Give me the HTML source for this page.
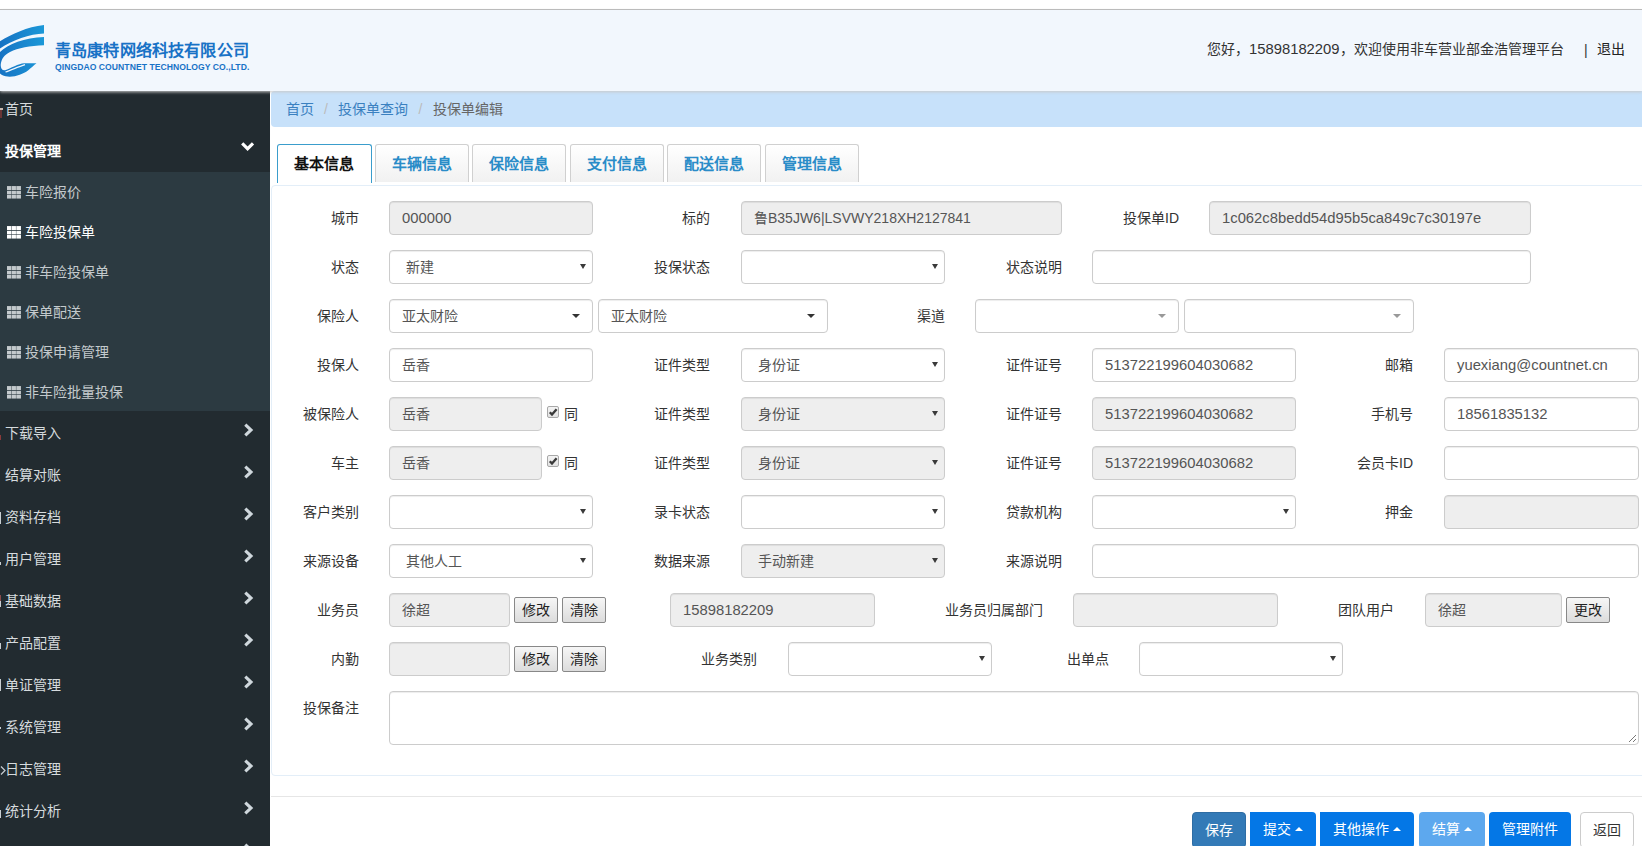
<!DOCTYPE html>
<html lang="zh-CN"><head><meta charset="utf-8">
<style>
*{box-sizing:border-box;margin:0;padding:0}
html,body{width:1642px;height:846px;overflow:hidden;background:#fff;font-family:"Liberation Sans",sans-serif;font-size:14px;color:#333}
.a{position:absolute;white-space:nowrap}
#topline{position:absolute;left:0;top:9px;width:1642px;height:1px;background:#b9b9b9}
#header{position:absolute;left:0;top:10px;width:1642px;height:81px;background:#f2f7fd;z-index:2;box-shadow:0 1px 3px #c8c8c8}
#side{position:absolute;left:0;top:91px;width:270px;height:755px;background:#222b30}
#sub{position:absolute;left:0;top:81px;width:270px;height:239px;background:#2c3a41}
.si{position:absolute;left:5px;color:#d6dbde;font-size:14px;line-height:20px}
.sub{position:absolute;left:25px;color:#c4cacd;font-size:14px;line-height:20px}
.grid{position:absolute;left:6.6px;width:15px;height:13px}
.chev{position:absolute;left:0;top:0}
#crumb{position:absolute;left:271px;top:91px;width:1371px;height:36px;background:#c7e1fa;border-radius:4px 0 0 4px}
.tab{position:absolute;top:144px;height:38px;border:1px solid #d0d0d0;border-bottom:none;border-radius:3px 3px 0 0;background:linear-gradient(#fff,#f1f1f1);color:#2a8cc8;font-weight:bold;font-size:15px;text-align:center;line-height:37px}
.tab.act{background:#fff;border-color:#3a9dcc;color:#111;height:39px;text-indent:-2px}
.lbl{position:absolute;font-size:14px;color:#333;line-height:20px;text-align:right;white-space:nowrap}
.inp{position:absolute;height:34px;border:1px solid #ccc;border-radius:4px;background:#fff;color:#555;font-size:14px;line-height:32px;padding-left:12px;white-space:nowrap;overflow:hidden;box-shadow:inset 0 1px 1px rgba(0,0,0,.075)}
.n{font-size:14.8px}
.dis{background:#eee}
.sel{padding-left:16px !important}
.arr{position:absolute;right:6px;top:13px;width:0;height:0;border-left:3px solid transparent;border-right:3px solid transparent;border-top:5.5px solid #3a3a3a}
.car{position:absolute;right:12px;top:14px;width:0;height:0;border-left:4px solid transparent;border-right:4px solid transparent;border-top:4px solid #333}
.car2{position:absolute;right:12px;top:14px;width:0;height:0;border-left:4px solid transparent;border-right:4px solid transparent;border-top:4px solid #999}
.btn{position:absolute;height:26px;border:1px solid #888;border-radius:2px;background:linear-gradient(#f6f6f6,#dcdcdc);font-size:14px;line-height:24px;text-align:center;color:#222}
.cb{position:absolute;width:12px;height:12px;border:1px solid #a8a8a8;border-radius:2px;background:linear-gradient(#f4f4f4,#e2e2e2)}
.bb{position:absolute;top:812px;height:36px;border-radius:4px;color:#fff;font-size:14px;line-height:34px;text-align:center;background:#0477e6}
.up{display:inline-block;width:0;height:0;border-left:4px solid transparent;border-right:4px solid transparent;border-bottom:4px solid #fff;vertical-align:middle;margin-left:4px;position:relative;top:-1px}
</style></head><body>
<div id="topline"></div>
<div id="header">
  <svg class="a" style="left:0;top:0" width="50" height="81" viewBox="0 10 50 81">
    <defs><linearGradient id="lg" x1="0" y1="0" x2="1" y2="0"><stop offset="0" stop-color="#1670c2"/><stop offset="1" stop-color="#1b98d8"/></linearGradient></defs>
    <path d="M44,25 L44,33.5 C30,34 12,40 0,48.5 L-2,49.5 L-2,42.5 C10,35 26,27 44,25 Z" fill="url(#lg)"/>
    <path d="M44,37 C24,37.5 6,45 -1,53 C-6,60 -4,72 2,75 C10,79 22,75 28,70.5 C31,68 34,65 36.5,63.2 L24,63.3 C19,63.5 10,68.5 5.2,70.3 C2,70.8 0.3,68 0.8,64 C1.5,59 4,55 10,52 C18,48 30,45.5 44,45.2 Z" fill="url(#lg)"/>
    <path d="M5.5,72 C11,70.2 18,66.8 25,64.6" stroke="#f2f7fd" stroke-width="1.2" fill="none"/>
  </svg>
  <div class="a" style="left:55px;top:30.5px;font-size:16px;transform:scaleX(1.01);transform-origin:0 0;font-weight:bold;color:#1872c6;line-height:20px">青岛康特网络科技有限公司</div>
  <div class="a" style="left:55px;top:52.3px;font-size:8.6px;letter-spacing:0.05px;font-weight:bold;color:#1872c6;line-height:10px">QINGDAO COUNTNET TECHNOLOGY CO.,LTD.</div>
  <div class="a" style="left:1207px;top:29px;font-size:14px;color:#333;line-height:20px">您好，<span class="n">15898182209</span>，欢迎使用非车营业部金浩管理平台</div>
  <div class="a" style="left:1584px;top:30px;font-size:14px;color:#333;line-height:20px">|</div>
  <div class="a" style="left:1597px;top:29px;font-size:14px;color:#222;line-height:20px">退出</div>
</div>
<div id="side">
<div class="a" style="left:0;top:19px;width:2px;height:8px;background:#6a3535"></div><div class="a" style="left:0;top:17px;width:3px;height:2px;background:#c9b9b0"></div>
<div class="a" style="left:0;top:344px;width:1.2px;height:5px;background:#8a3a3a"></div>
<div class="a" style="left:0;top:421px;width:1.2px;height:12px;background:#c8ced2"></div>
<div class="a" style="left:0;top:471px;width:1.2px;height:3px;background:#c8ced2"></div>
<div class="a" style="left:0;top:504px;width:1.2px;height:6px;background:#8a4a4a"></div>
<div class="a" style="left:0;top:510px;width:1.2px;height:6px;background:#c8ced2"></div>
<div class="a" style="left:0;top:552px;width:1.2px;height:6px;background:#c8ced2"></div>
<div class="a" style="left:0;top:588px;width:1.2px;height:12px;background:#c8ced2"></div>
<div class="a" style="left:0;top:636px;width:1.2px;height:2px;background:#c8ced2"></div>
<div class="a" style="left:0;top:719px;width:1.2px;height:8px;background:#c8ced2"></div>
<svg class="a" style="left:0;top:675px" width="8" height="9" viewBox="0 0 8 9"><path d="M1,0.5 L5,4.5 L1,8.5" stroke="#c8ced2" stroke-width="1.2" fill="none"/></svg>
<div class="si" style="top:8px">首页</div>
<div class="si" style="top:50px;color:#fff;font-weight:bold">投保管理</div>
<svg class="chev" width="270" height="200"><path d="M242.2,52.3 L247.6,57.7 L253,52.3" stroke="#fff" stroke-width="3.1" fill="none"/></svg>
<div id="sub">
<svg class="grid" style="top:14px" width="15" height="13" viewBox="0 0 15.6 13.4" fill="#c4cacd"><rect x="0" y="0" width="4.5" height="4.2"/><rect x="4.9" y="0" width="4.4" height="4.2"/><rect x="9.7" y="0" width="4.8" height="4.2"/><rect x="0" y="5" width="4.5" height="3.3"/><rect x="4.9" y="5" width="4.4" height="3.3"/><rect x="9.7" y="5" width="4.8" height="3.3"/><rect x="0" y="8.9" width="4.5" height="4.1"/><rect x="4.9" y="8.9" width="4.4" height="4.1"/><rect x="9.7" y="8.9" width="4.8" height="4.1"/></svg>
<div class="sub" style="top:10px;color:#c4cacd">车险报价</div>
<svg class="grid" style="top:54px" width="15" height="13" viewBox="0 0 15.6 13.4" fill="#fff"><rect x="0" y="0" width="4.5" height="4.2"/><rect x="4.9" y="0" width="4.4" height="4.2"/><rect x="9.7" y="0" width="4.8" height="4.2"/><rect x="0" y="5" width="4.5" height="3.3"/><rect x="4.9" y="5" width="4.4" height="3.3"/><rect x="9.7" y="5" width="4.8" height="3.3"/><rect x="0" y="8.9" width="4.5" height="4.1"/><rect x="4.9" y="8.9" width="4.4" height="4.1"/><rect x="9.7" y="8.9" width="4.8" height="4.1"/></svg>
<div class="sub" style="top:50px;color:#fff">车险投保单</div>
<svg class="grid" style="top:94px" width="15" height="13" viewBox="0 0 15.6 13.4" fill="#c4cacd"><rect x="0" y="0" width="4.5" height="4.2"/><rect x="4.9" y="0" width="4.4" height="4.2"/><rect x="9.7" y="0" width="4.8" height="4.2"/><rect x="0" y="5" width="4.5" height="3.3"/><rect x="4.9" y="5" width="4.4" height="3.3"/><rect x="9.7" y="5" width="4.8" height="3.3"/><rect x="0" y="8.9" width="4.5" height="4.1"/><rect x="4.9" y="8.9" width="4.4" height="4.1"/><rect x="9.7" y="8.9" width="4.8" height="4.1"/></svg>
<div class="sub" style="top:90px;color:#c4cacd">非车险投保单</div>
<svg class="grid" style="top:134px" width="15" height="13" viewBox="0 0 15.6 13.4" fill="#c4cacd"><rect x="0" y="0" width="4.5" height="4.2"/><rect x="4.9" y="0" width="4.4" height="4.2"/><rect x="9.7" y="0" width="4.8" height="4.2"/><rect x="0" y="5" width="4.5" height="3.3"/><rect x="4.9" y="5" width="4.4" height="3.3"/><rect x="9.7" y="5" width="4.8" height="3.3"/><rect x="0" y="8.9" width="4.5" height="4.1"/><rect x="4.9" y="8.9" width="4.4" height="4.1"/><rect x="9.7" y="8.9" width="4.8" height="4.1"/></svg>
<div class="sub" style="top:130px;color:#c4cacd">保单配送</div>
<svg class="grid" style="top:174px" width="15" height="13" viewBox="0 0 15.6 13.4" fill="#c4cacd"><rect x="0" y="0" width="4.5" height="4.2"/><rect x="4.9" y="0" width="4.4" height="4.2"/><rect x="9.7" y="0" width="4.8" height="4.2"/><rect x="0" y="5" width="4.5" height="3.3"/><rect x="4.9" y="5" width="4.4" height="3.3"/><rect x="9.7" y="5" width="4.8" height="3.3"/><rect x="0" y="8.9" width="4.5" height="4.1"/><rect x="4.9" y="8.9" width="4.4" height="4.1"/><rect x="9.7" y="8.9" width="4.8" height="4.1"/></svg>
<div class="sub" style="top:170px;color:#c4cacd">投保申请管理</div>
<svg class="grid" style="top:214px" width="15" height="13" viewBox="0 0 15.6 13.4" fill="#c4cacd"><rect x="0" y="0" width="4.5" height="4.2"/><rect x="4.9" y="0" width="4.4" height="4.2"/><rect x="9.7" y="0" width="4.8" height="4.2"/><rect x="0" y="5" width="4.5" height="3.3"/><rect x="4.9" y="5" width="4.4" height="3.3"/><rect x="9.7" y="5" width="4.8" height="3.3"/><rect x="0" y="8.9" width="4.5" height="4.1"/><rect x="4.9" y="8.9" width="4.4" height="4.1"/><rect x="9.7" y="8.9" width="4.8" height="4.1"/></svg>
<div class="sub" style="top:210px;color:#c4cacd">非车险批量投保</div>
</div>
<div class="si" style="top:332px">下载导入</div>
<div class="si" style="top:374px">结算对账</div>
<div class="si" style="top:416px">资料存档</div>
<div class="si" style="top:458px">用户管理</div>
<div class="si" style="top:500px">基础数据</div>
<div class="si" style="top:542px">产品配置</div>
<div class="si" style="top:584px">单证管理</div>
<div class="si" style="top:626px">系统管理</div>
<div class="si" style="top:668px">日志管理</div>
<div class="si" style="top:710px">统计分析</div>
<svg class="chev" width="270" height="755"><path d="M245.3,333.6 L251,339 L245.3,344.4" stroke="#cfd7dc" stroke-width="3.1" fill="none"/><path d="M245.3,375.6 L251,381 L245.3,386.4" stroke="#cfd7dc" stroke-width="3.1" fill="none"/><path d="M245.3,417.6 L251,423 L245.3,428.4" stroke="#cfd7dc" stroke-width="3.1" fill="none"/><path d="M245.3,459.6 L251,465 L245.3,470.4" stroke="#cfd7dc" stroke-width="3.1" fill="none"/><path d="M245.3,501.6 L251,507 L245.3,512.4" stroke="#cfd7dc" stroke-width="3.1" fill="none"/><path d="M245.3,543.6 L251,549 L245.3,554.4" stroke="#cfd7dc" stroke-width="3.1" fill="none"/><path d="M245.3,585.6 L251,591 L245.3,596.4" stroke="#cfd7dc" stroke-width="3.1" fill="none"/><path d="M245.3,627.6 L251,633 L245.3,638.4" stroke="#cfd7dc" stroke-width="3.1" fill="none"/><path d="M245.3,669.6 L251,675 L245.3,680.4" stroke="#cfd7dc" stroke-width="3.1" fill="none"/><path d="M245.3,711.6 L251,717 L245.3,722.4" stroke="#cfd7dc" stroke-width="3.1" fill="none"/><path d="M245.3,753.6 L251,759 L245.3,764.4" stroke="#cfd7dc" stroke-width="3.1" fill="none"/></svg>
</div>
<div id="crumb">
  <div class="a" style="left:15px;top:8px;color:#3a80c0;line-height:20px">首页 <span style="color:#bbb;padding:0 6px">/</span> 投保单查询 <span style="color:#bbb;padding:0 7px 0 7px">/</span> <span style="color:#666">投保单编辑</span></div>
</div>
<div class="tab act" style="left:277px;width:95px">基本信息</div>
<div class="tab" style="left:375px;width:94px">车辆信息</div>
<div class="tab" style="left:472px;width:94px">保险信息</div>
<div class="tab" style="left:570px;width:94px">支付信息</div>
<div class="tab" style="left:667px;width:94px">配送信息</div>
<div class="tab" style="left:765px;width:94px">管理信息</div>
<div style="position:absolute;left:271px;top:185px;width:1380px;height:591px;border:1px solid #e3eef8;border-radius:4px"></div>
<div style="position:absolute;left:271px;top:796px;width:1371px;height:1px;background:#e6e6e6"></div>
<div class="lbl" style="right:1283px;top:208px">城市</div>
<div class="inp dis" style="left:389px;top:201px;width:204px"><span class="n">000000</span></div>
<div class="lbl" style="right:932px;top:208px">标的</div>
<div class="inp dis" style="left:741px;top:201px;width:321px">鲁B35JW6|LSVWY218XH2127841</div>
<div class="lbl" style="right:463px;top:208px">投保单ID</div>
<div class="inp dis" style="left:1209px;top:201px;width:322px"><span class="n">1c062c8bedd54d95b5ca849c7c30197e</span></div>
<div class="lbl" style="right:1283px;top:257px">状态</div>
<div class="inp sel" style="left:389px;top:250px;width:204px">新建<i class="arr"></i></div>
<div class="lbl" style="right:932px;top:257px">投保状态</div>
<div class="inp sel" style="left:741px;top:250px;width:204px"><i class="arr"></i></div>
<div class="lbl" style="right:580px;top:257px">状态说明</div>
<div class="inp" style="left:1092px;top:250px;width:439px"></div>
<div class="lbl" style="right:1283px;top:306px">保险人</div>
<div class="inp" style="left:389px;top:299px;width:204px">亚太财险<i class="car"></i></div>
<div class="inp" style="left:598px;top:299px;width:230px">亚太财险<i class="car"></i></div>
<div class="lbl" style="right:697px;top:306px">渠道</div>
<div class="inp" style="left:975px;top:299px;width:204px"><i class="car2"></i></div>
<div class="inp" style="left:1184px;top:299px;width:230px"><i class="car2"></i></div>
<div class="lbl" style="right:1283px;top:355px">投保人</div>
<div class="inp" style="left:389px;top:348px;width:204px">岳香</div>
<div class="lbl" style="right:932px;top:355px">证件类型</div>
<div class="inp sel" style="left:741px;top:348px;width:204px">身份证<i class="arr"></i></div>
<div class="lbl" style="right:580px;top:355px">证件证号</div>
<div class="inp" style="left:1092px;top:348px;width:204px"><span class="n">513722199604030682</span></div>
<div class="lbl" style="right:229px;top:355px">邮箱</div>
<div class="inp" style="left:1444px;top:348px;width:195px"><span class="n">yuexiang@countnet.cn</span></div>
<div class="lbl" style="right:1283px;top:404px">被保险人</div>
<div class="inp dis" style="left:389px;top:397px;width:153px">岳香</div>
<div class="cb" style="left:547px;top:406px"><svg width="10" height="10" viewBox="0 0 10 10" style="position:absolute;left:0;top:0"><path d="M1.8,5.2 L4,7.6 L8.6,2.2" stroke="#3a3a3a" stroke-width="2.3" fill="none"/></svg></div>
<div class="lbl" style="left:564px;top:404px">同</div>
<div class="lbl" style="right:932px;top:404px">证件类型</div>
<div class="inp sel dis" style="left:741px;top:397px;width:204px">身份证<i class="arr"></i></div>
<div class="lbl" style="right:580px;top:404px">证件证号</div>
<div class="inp dis" style="left:1092px;top:397px;width:204px"><span class="n">513722199604030682</span></div>
<div class="lbl" style="right:229px;top:404px">手机号</div>
<div class="inp" style="left:1444px;top:397px;width:195px"><span class="n">18561835132</span></div>
<div class="lbl" style="right:1283px;top:453px">车主</div>
<div class="inp dis" style="left:389px;top:446px;width:153px">岳香</div>
<div class="cb" style="left:547px;top:455px"><svg width="10" height="10" viewBox="0 0 10 10" style="position:absolute;left:0;top:0"><path d="M1.8,5.2 L4,7.6 L8.6,2.2" stroke="#3a3a3a" stroke-width="2.3" fill="none"/></svg></div>
<div class="lbl" style="left:564px;top:453px">同</div>
<div class="lbl" style="right:932px;top:453px">证件类型</div>
<div class="inp sel dis" style="left:741px;top:446px;width:204px">身份证<i class="arr"></i></div>
<div class="lbl" style="right:580px;top:453px">证件证号</div>
<div class="inp dis" style="left:1092px;top:446px;width:204px"><span class="n">513722199604030682</span></div>
<div class="lbl" style="right:229px;top:453px">会员卡ID</div>
<div class="inp" style="left:1444px;top:446px;width:195px"></div>
<div class="lbl" style="right:1283px;top:502px">客户类别</div>
<div class="inp sel" style="left:389px;top:495px;width:204px"><i class="arr"></i></div>
<div class="lbl" style="right:932px;top:502px">录卡状态</div>
<div class="inp sel" style="left:741px;top:495px;width:204px"><i class="arr"></i></div>
<div class="lbl" style="right:580px;top:502px">贷款机构</div>
<div class="inp sel" style="left:1092px;top:495px;width:204px"><i class="arr"></i></div>
<div class="lbl" style="right:229px;top:502px">押金</div>
<div class="inp dis" style="left:1444px;top:495px;width:195px"></div>
<div class="lbl" style="right:1283px;top:551px">来源设备</div>
<div class="inp sel" style="left:389px;top:544px;width:204px">其他人工<i class="arr"></i></div>
<div class="lbl" style="right:932px;top:551px">数据来源</div>
<div class="inp sel dis" style="left:741px;top:544px;width:204px">手动新建<i class="arr"></i></div>
<div class="lbl" style="right:580px;top:551px">来源说明</div>
<div class="inp" style="left:1092px;top:544px;width:547px"></div>
<div class="lbl" style="right:1283px;top:600px">业务员</div>
<div class="inp dis" style="left:389px;top:593px;width:121px">徐超</div>
<div class="btn" style="left:514px;top:597px;width:44px">修改</div>
<div class="btn" style="left:562px;top:597px;width:44px">清除</div>
<div class="inp dis" style="left:670px;top:593px;width:205px"><span class="n">15898182209</span></div>
<div class="lbl" style="right:599px;top:600px">业务员归属部门</div>
<div class="inp dis" style="left:1073px;top:593px;width:205px"></div>
<div class="lbl" style="right:248px;top:600px">团队用户</div>
<div class="inp dis" style="left:1425px;top:593px;width:137px">徐超</div>
<div class="btn" style="left:1566px;top:597px;width:44px">更改</div>
<div class="lbl" style="right:1283px;top:649px">内勤</div>
<div class="inp dis" style="left:389px;top:642px;width:121px"></div>
<div class="btn" style="left:514px;top:646px;width:44px">修改</div>
<div class="btn" style="left:562px;top:646px;width:44px">清除</div>
<div class="lbl" style="right:885px;top:649px">业务类别</div>
<div class="inp sel" style="left:788px;top:642px;width:204px"><i class="arr"></i></div>
<div class="lbl" style="right:533px;top:649px">出单点</div>
<div class="inp sel" style="left:1139px;top:642px;width:204px"><i class="arr"></i></div>
<div class="lbl" style="right:1283px;top:698px">投保备注</div>
<div class="inp" style="left:389px;top:691px;width:1250px;height:54px"><svg style="position:absolute;right:1px;bottom:1px" width="10" height="10" viewBox="0 0 10 10"><path d="M9,2 L2,9 M9,6 L6,9" stroke="#777" stroke-width="1"/></svg></div>
<div class="bb" style="left:1192px;width:54px;background:#337ab7;border:1px solid #2e6da4">保存</div>
<div class="bb" style="left:1250px;width:66px;border-radius:0 4px 4px 0">提交<i class="up"></i></div>
<div class="bb" style="left:1320px;width:94px;border-radius:0 4px 4px 0">其他操作<i class="up"></i></div>
<div class="bb" style="left:1419px;width:66px;background:#5da8ee">结算<i class="up"></i></div>
<div class="bb" style="left:1489px;width:82px">管理附件</div>
<div class="bb" style="left:1580px;width:54px;background:#fff;border:1px solid #ccc;color:#333">返回</div>
</body></html>
